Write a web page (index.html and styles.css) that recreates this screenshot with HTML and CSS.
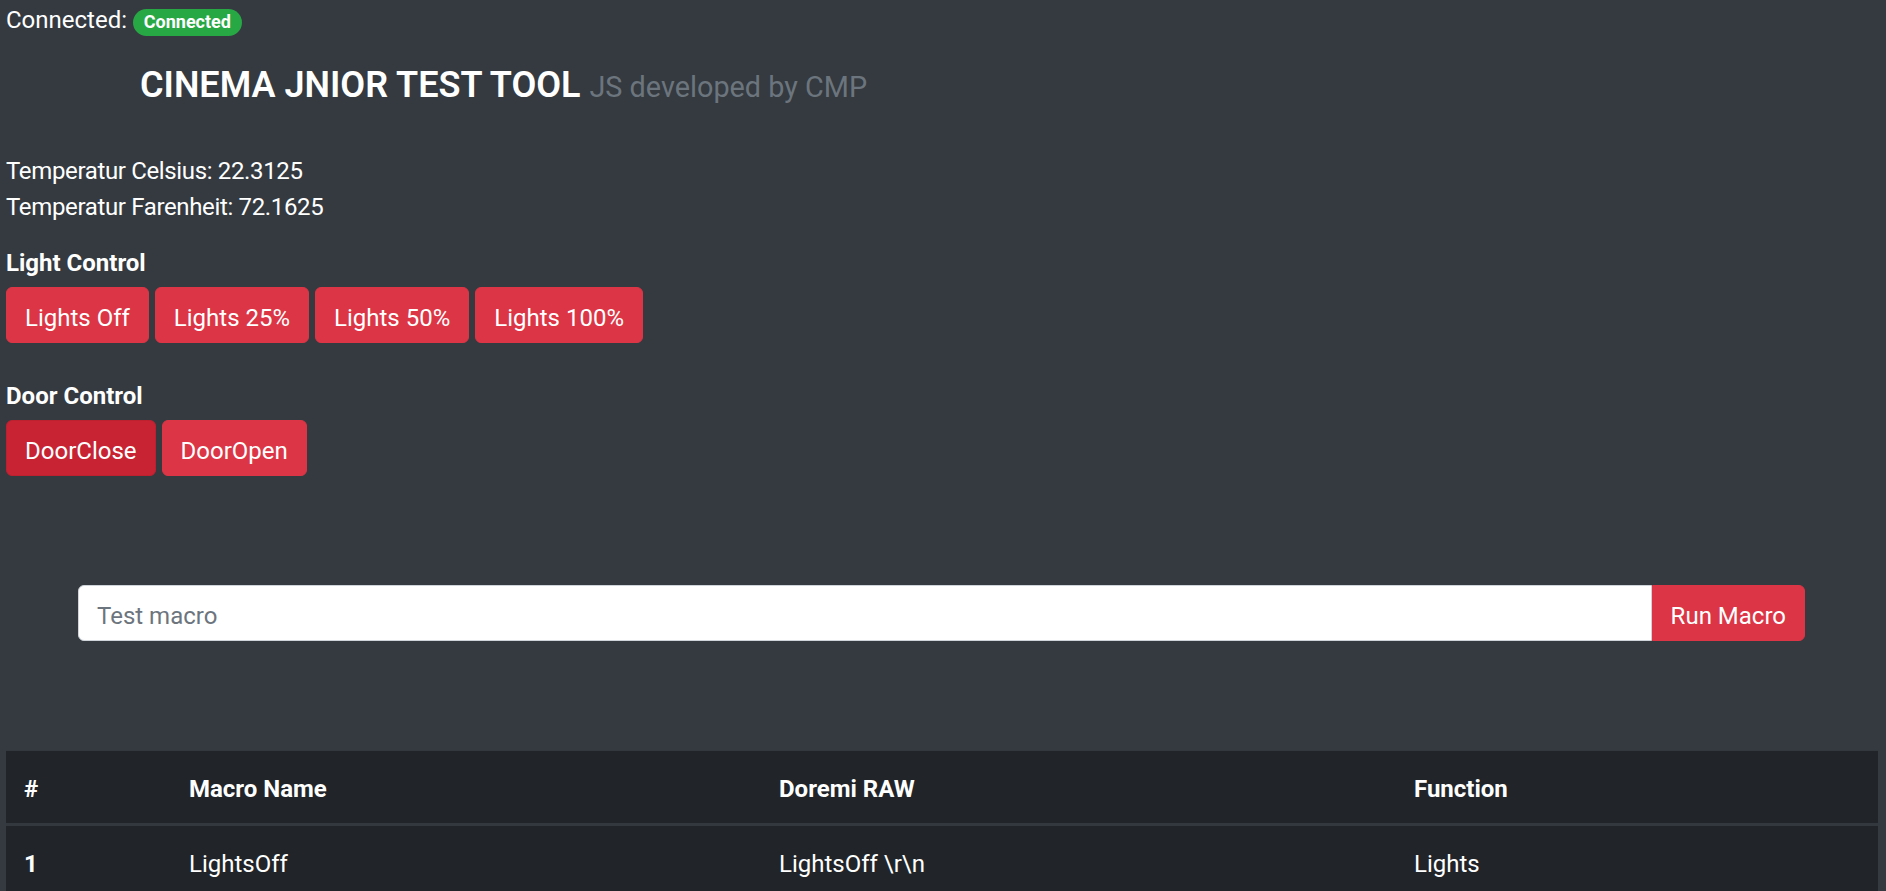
FILE: index.html
```html
<!DOCTYPE html>
<html lang="de">
<head>
<meta charset="utf-8">
<title>Cinema JNIOR Test Tool</title>
<link rel="stylesheet" href="styles.css">
</head>
<body>
<div class="page">
  <p class="status">Connected: <span class="badge">Connected</span></p>

  <h4 class="title">CINEMA JNIOR TEST TOOL <small class="muted">JS developed by CMP</small></h4>

  <div class="temps">
    <p class="temp">Temperatur Celsius: 22.3125</p>
    <p class="temp">Temperatur Farenheit: 72.1625</p>
  </div>

  <section class="control light">
    <h6 class="control-title">Light Control</h6>
    <div class="btn-row">
      <button class="btn">Lights Off</button>
      <button class="btn">Lights 25%</button>
      <button class="btn">Lights 50%</button>
      <button class="btn">Lights 100%</button>
    </div>
  </section>

  <section class="control door">
    <h6 class="control-title">Door Control</h6>
    <div class="btn-row">
      <button class="btn btn-active">DoorClose</button>
      <button class="btn">DoorOpen</button>
    </div>
  </section>

  <div class="macro-group">
    <input class="macro-input" type="text" placeholder="Test macro">
    <button class="btn btn-append">Run Macro</button>
  </div>

  <table class="macro-table">
    <colgroup>
      <col class="c-num">
      <col class="c-name">
      <col class="c-raw">
      <col class="c-func">
    </colgroup>
    <thead>
      <tr>
        <th>#</th>
        <th>Macro Name</th>
        <th>Doremi RAW</th>
        <th>Function</th>
      </tr>
    </thead>
    <tbody>
      <tr>
        <th>1</th>
        <td>LightsOff</td>
        <td>LightsOff \r\n</td>
        <td>Lights</td>
      </tr>
    </tbody>
  </table>
</div>
</body>
</html>
```
FILE: styles.css
```css
html, body {
  margin: 0;
  padding: 0;
}

body {
  background: #343a40;
  color: #ffffff;
  font-family: Roboto, "Liberation Sans", sans-serif;
  font-size: 24px;
  line-height: 36px;
  overflow: hidden;
}

.page {
  padding: 0 8px 0 6px;
}

p {
  margin: 0;
}

.status {
  padding-top: 2px;
  margin-bottom: 0;
}

.badge {
  display: inline-block;
  background: #28a745;
  color: #fff;
  font-size: 18px;
  font-weight: 700;
  line-height: 1;
  padding: 4.5px 10.8px;
  border-radius: 15px;
  vertical-align: 0;
}

.title {
  margin: 25.5px 0 44.5px 134px;
  font-size: 36px;
  font-weight: 600;
  line-height: 43.2px;
}

.muted {
  font-size: 80%;
  font-weight: 400;
  color: #6c757d;
}

.temps {
  margin-bottom: 24px;
}

.temp {
  letter-spacing: -0.35px;
}

.control-title {
  margin: 0 0 9px;
  font-size: 24px;
  font-weight: 700;
  line-height: 28.8px;
}

.light {
  margin-bottom: 39px;
}

.btn-row {
  display: flex;
  gap: 6px;
}

.btn {
  font-family: inherit;
  font-size: 24px;
  line-height: 36px;
  color: #fff;
  background: #dc3545;
  border: 1px solid #dc3545;
  border-radius: 6px;
  padding: 12px 18px 6px;
  cursor: pointer;
}

.btn-active {
  background: #c82333;
  border-color: #bd2130;
}

.macro-group {
  display: flex;
  margin: 109px 73px 0 72px;
}

.macro-input {
  flex: 1;
  min-width: 0;
  height: 56px;
  box-sizing: border-box;
  font-family: inherit;
  font-size: 24px;
  line-height: 36px;
  color: #495057;
  background: #fff;
  border: 1px solid #ced4da;
  border-radius: 6px 0 0 6px;
  padding: 12px 18px 6px;
  margin: 0;
}

.macro-input::placeholder {
  color: #6c757d;
}

.btn-append {
  border-radius: 0 6px 6px 0;
  height: 56px;
  box-sizing: border-box;
}

.macro-table {
  width: 100%;
  table-layout: fixed;
  border-collapse: collapse;
  margin-top: 109px;
  background: #212529;
  color: #fff;
}

.c-num { width: 165px; }
.c-name { width: 590px; }
.c-raw { width: 635px; }
.c-func { width: 482px; }

.macro-table th,
.macro-table td {
  padding: 18px;
  text-align: left;
  vertical-align: top;
  border-top: 1px solid #32383e;
  line-height: 36px;
}

.macro-table th {
  font-weight: 700;
}

.macro-table td {
  font-weight: 400;
}

.macro-table thead th {
  border-bottom: 3px solid #32383e;
  padding-top: 20px;
  padding-bottom: 16px;
}

.macro-table tbody th,
.macro-table tbody td {
  padding-top: 20px;
}
```
